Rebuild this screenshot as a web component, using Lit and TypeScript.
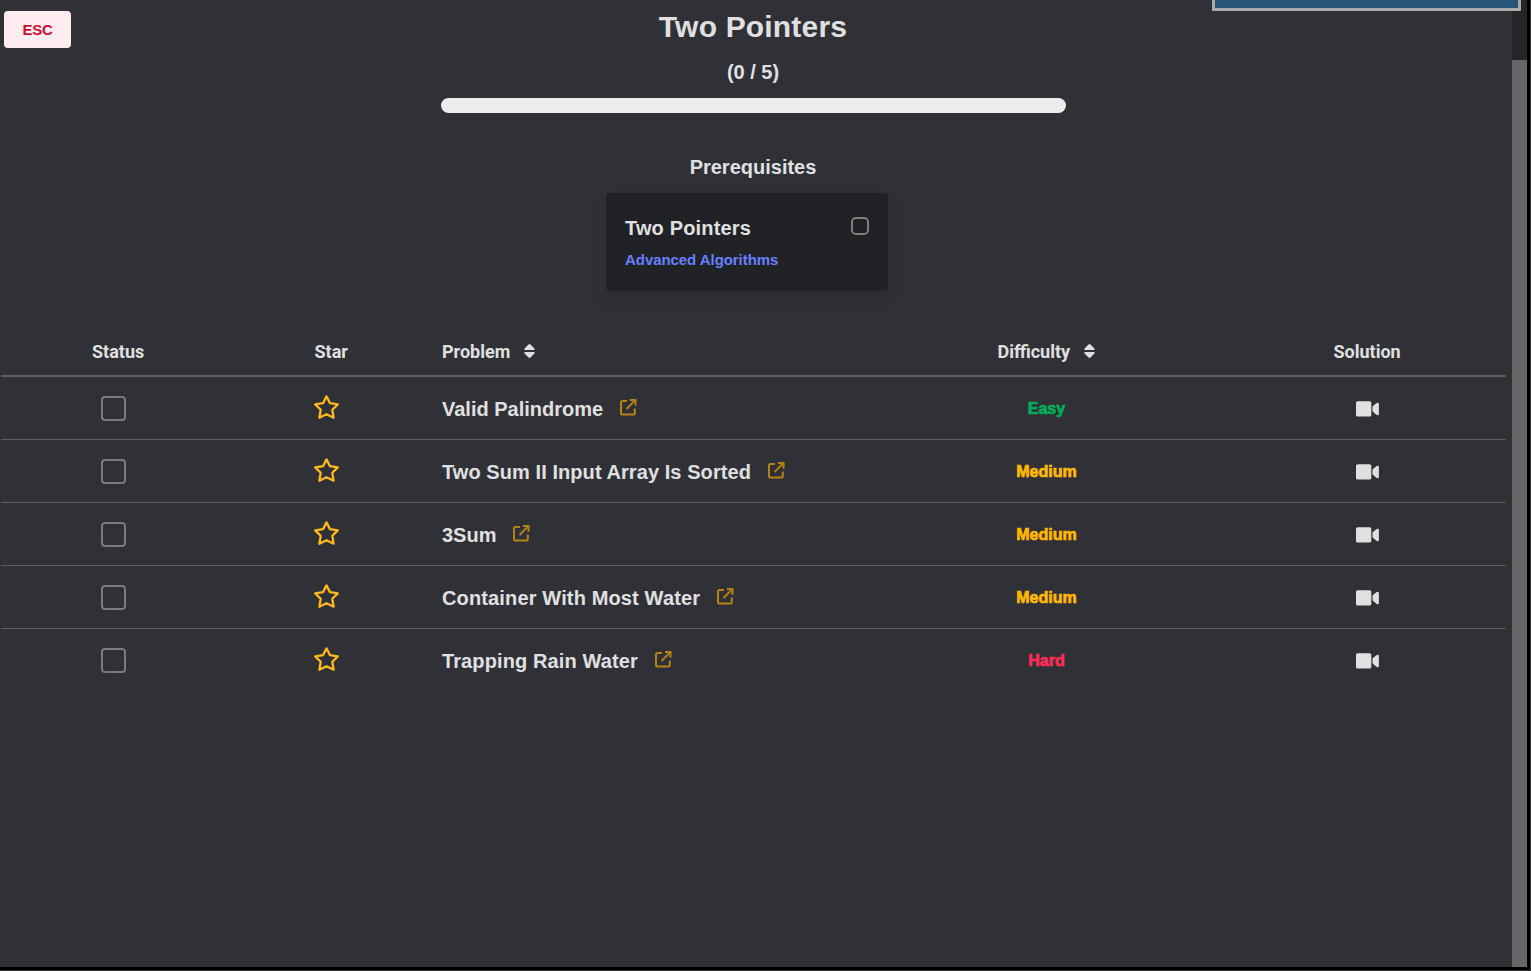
import { LitElement, html, css } from "lit";
import { customElement } from "lit/decorators.js";
import { styleMap } from "lit/directives/style-map.js";

type Level = "Easy" | "Medium" | "Hard";

const PROBLEMS: { name: string; level: Level; tracking: number }[] = [
  { name: "Valid Palindrome", level: "Easy", tracking: 0 },
  { name: "Two Sum II Input Array Is Sorted", level: "Medium", tracking: 0.07 },
  { name: "3Sum", level: "Medium", tracking: 0 },
  { name: "Container With Most Water", level: "Medium", tracking: 0.14 },
  { name: "Trapping Rain Water", level: "Hard", tracking: 0.11 },
];

const star = html`<svg class="star" width="27" height="27" viewBox="0 0 27 27" fill="none" stroke="#ffb91c" stroke-width="2.3" stroke-linejoin="round">
  <path d="M13.5 2.4 17 9.2 24.8 10.4 19.3 15.8 20.6 23.7 13.5 20.2 6.4 23.7 7.7 15.8 2.2 10.4 10 9.2Z" />
</svg>`;

const external = html`<svg class="external" width="17" height="17" viewBox="0 0 17 17" fill="none" stroke="#b38314" stroke-width="2">
  <path d="M7 2H2.6Q1 2 1 3.6V13.9Q1 15.5 2.6 15.5H13.2Q14.8 15.5 14.8 13.9V9.5" />
  <path d="M6.5 10 14.6 1.9" />
  <path d="M10 1H15.5V6.8" />
</svg>`;

const sort = html`<svg class="sort" width="12" height="16" viewBox="0 0 12 16" fill="#e0e0e0">
  <path d="M4.8 1.3Q5.5 .7 6.2 1.3L10.4 5.5Q11.1 6.8 9.9 7H1.1Q-.1 6.8 .6 5.5Z" />
  <path d="M4.8 14.7Q5.5 15.3 6.2 14.7L10.4 10.5Q11.1 9.2 9.9 9H1.1Q-.1 9.2 .6 10.5Z" />
</svg>`;

const video = html`<svg class="video" width="23" height="16" viewBox="0 0 23 16" fill="#e0e0e0">
  <rect x="0" y="0.2" width="15.3" height="15.4" rx="1.6" />
  <path d="M16.5 5.6 20.3 2.2Q22.9 1 22.9 3V13Q22.9 15 20.3 13.8L16.5 10.3Z" />
</svg>`;

@customElement("app-root")
export class AppRoot extends LitElement {
  static styles = css`
    :host {
      display: block;
      height: 971px;
      overflow: hidden;
      position: relative;
      font-family: "Liberation Sans", Arial, sans-serif;
      font-weight: 700;
      color: #e0e0e0;
      background: #000;
    }
    * {
      box-sizing: border-box;
    }
    .frame {
      display: flex;
      height: 971px;
      padding: 0 3px 3px 0;
      border-right: 1px solid #333;
      border-bottom: 1px solid #333;
    }
    .page {
      width: 1512px;
      background: #303136;
    }
    .track {
      width: 15px;
      padding-top: 60px;
      background: #252525;
    }
    .thumb {
      height: 100%;
      background: #666;
    }
    .notice {
      position: absolute;
      left: 1212px;
      top: -30px;
      width: 309px;
      height: 41px;
      border: 3px solid #a9a9a9;
      background: #275577;
    }
    .esc {
      position: absolute;
      left: 4px;
      top: 11px;
      width: 67px;
      height: 37px;
      border: 0;
      padding: 0;
      border-radius: 4px;
      background: #feecf0;
      color: #cc0f35;
      font: 700 15px/37px "Liberation Sans", Arial, sans-serif;
      letter-spacing: -0.2px;
      text-align: center;
    }
    .header {
      display: flex;
      flex-direction: column;
      align-items: center;
      width: 1506px;
      height: 329px;
      padding-top: 9px;
    }
    .title {
      margin: 0;
      font-size: 30px;
      line-height: 36px;
      letter-spacing: 0.18px;
    }
    .count {
      margin-top: 15px;
      font-size: 20px;
      line-height: 24px;
    }
    .bar {
      width: 625px;
      height: 15px;
      margin: 14px 0 0 1px;
      border-radius: 8px;
      background: #ececec;
    }
    .subtitle {
      margin: 42px 0 0;
      font-size: 20px;
      line-height: 24px;
    }
    .card {
      display: flex;
      justify-content: space-between;
      width: 282px;
      height: 98px;
      margin: 14px 12px 0 0;
      padding: 23px 19px 0;
      border-radius: 4px;
      background: #212226;
      box-shadow: 0 8px 16px -2px rgba(10, 10, 10, 0.1);
    }
    .name {
      font-size: 20px;
      line-height: 24px;
      letter-spacing: 0.16px;
    }
    .course {
      margin-top: 10px;
      font-size: 15px;
      line-height: 20px;
      letter-spacing: -0.06px;
      color: #6680ff;
    }
    .check {
      width: 25px;
      height: 25px;
      border: 2px solid #7b7b7b;
      border-radius: 4px;
    }
    .check.small {
      width: 18px;
      height: 18px;
      margin-top: 1px;
      border-color: #80807f;
      border-radius: 5px;
    }
    .table {
      width: 1505px;
      margin-left: 1px;
    }
    .row {
      display: grid;
      grid-template-columns: 91px 222px 128px 555px 336px 1fr;
      height: 63px;
      border-bottom: 1px solid #5f5f5f;
    }
    .row:last-child {
      border-bottom: 0;
    }
    .row.head {
      height: 48px;
      border-bottom: 2px solid #5f5f5f;
      font: 700 18px/24px Roboto, sans-serif;
      padding-top: 11px;
    }
    .row > :first-child {
      grid-column: 2;
    }
    .shift {
      padding-left: 0.5px;
    }
    .sortable {
      display: flex;
      gap: 14px;
    }
    .sort {
      margin-top: 3px;
    }
    .row > .check {
      margin: 19px 0 0 9px;
    }
    .star {
      margin: 17px 0 0 -1px;
    }
    .problem {
      display: flex;
      gap: 17px;
      padding-top: 20px;
      font-size: 20px;
      line-height: 24px;
    }
    .external {
      margin-top: 2px;
    }
    .level {
      width: 99px;
      text-align: center;
      padding-top: 22px;
      font-size: 16px;
      line-height: 19px;
      letter-spacing: 0.05px;
      -webkit-text-stroke: 0.7px currentColor;
    }
    .Easy {
      color: #00af5b;
    }
    .Medium {
      color: #ffb800;
    }
    .Hard {
      color: #ff2d55;
    }
    .video {
      margin: 24px 0 0 23px;
    }
  `;

  render() {
    return html`
      <div class="frame">
        <main class="page">
          <div class="header">
            <h1 class="title">Two Pointers</h1>
            <div class="count">(0 / 5)</div>
            <div class="bar"></div>
            <h2 class="subtitle">Prerequisites</h2>
            <div class="card">
              <div>
                <div class="name">Two Pointers</div>
                <div class="course">Advanced Algorithms</div>
              </div>
              <div class="check small"></div>
            </div>
          </div>
          <div class="table">
            <div class="row head">
              <span>Status</span>
              <span class="shift">Star</span>
              <span class="sortable">Problem ${sort}</span>
              <span class="sortable shift">Difficulty ${sort}</span>
              <span class="shift">Solution</span>
            </div>
            ${PROBLEMS.map(
              (p) => html`<div class="row">
                <div class="check"></div>
                ${star}
                <div class="problem">
                  <span style=${styleMap({ letterSpacing: `${p.tracking}px` })}>${p.name}</span>${external}
                </div>
                <div class="level ${p.level}">${p.level}</div>
                ${video}
              </div>`
            )}
          </div>
        </main>
        <div class="track"><div class="thumb"></div></div>
      </div>
      <button class="esc">ESC</button>
      <div class="notice"></div>
    `;
  }
}
